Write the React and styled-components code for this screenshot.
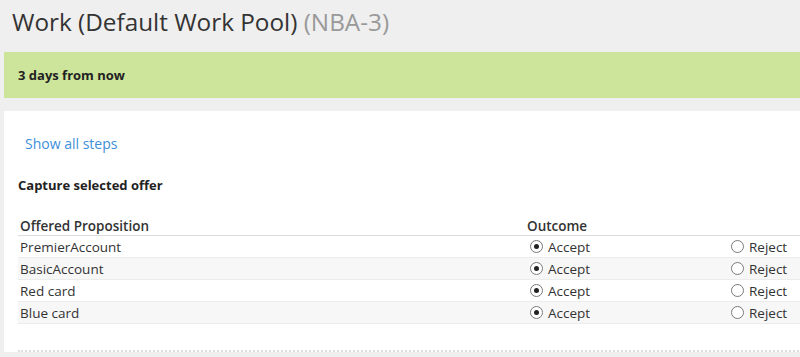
import React from "react";
import styled, { createGlobalStyle } from "styled-components";

const Global = createGlobalStyle`
  html, body { margin: 0; padding: 0; background: #efefef; overflow: hidden; }
  body { font-family: "Open Sans", "Noto Sans", sans-serif; color: #333; }
`;

const Page = styled.div`
  width: 830px;
  height: 357px;
  padding: 0 0 5px 4px;
  box-sizing: border-box;
  display: flex;
  flex-direction: column;
`;

const Title = styled.h1`
  margin: 0;
  padding: 5px 0 0 8px;
  height: 52px;
  box-sizing: border-box;
  font-size: 24.3px;
  font-weight: 400;
  color: #333;
  line-height: 34px;
`;

const Muted = styled.span`
  color: #999;
`;

const Banner = styled.div`
  background: #cde59b;
  height: 46px;
  display: flex;
  align-items: center;
  padding-left: 14px;
  font-size: 13px;
  font-weight: 700;
  color: #222;
  margin-bottom: 13px;
`;

const Panel = styled.div`
  background: #fff;
  flex: 1;
  padding: 23px 0 0 14px;
  display: flex;
  flex-direction: column;
`;

const Link = styled.a`
  color: #3d8fd9;
  font-size: 14px;
  margin-left: 7px;
  text-decoration: none;
  line-height: 20px;
`;

const Section = styled.div`
  margin-top: 21px;
  font-size: 13px;
  font-weight: 700;
  color: #222;
  line-height: 20px;
`;

const Table = styled.div`
  margin-top: 21px;
  display: grid;
  grid-template-columns: 509px 201px 1fr;
`;

const Head = styled.div`
  font-size: 13.5px;
  font-weight: 600;
  color: #333;
  padding-left: ${(p) => (p.$first ? "2px" : "0")};
  height: 19px;
  line-height: 21px;
  border-bottom: 1px solid #dcdcdc;
`;

const Cell = styled.div`
  height: 21px;
  display: flex;
  align-items: center;
  font-size: 13.5px;
  color: #333;
  padding-left: ${(p) => (p.$first ? "2px" : "3px")};
  background: ${(p) => (p.$alt ? "#f7f7f7" : "#fff")};
  border-bottom: 1px solid #ececec;
`;

const Radio = styled.span`
  width: 11px;
  height: 11px;
  border-radius: 50%;
  border: 1px solid #7a7a7a;
  background: #fff;
  display: inline-flex;
  align-items: center;
  justify-content: center;
  margin-right: 5px;
  flex-shrink: 0;
  &::after {
    content: "";
    width: 5px;
    height: 5px;
    border-radius: 50%;
    background: ${(p) => (p.$on ? "#222" : "transparent")};
  }
`;

const Footer = styled.div`
  margin-top: 26px;
  border-top: 2px dotted #ddd;
`;

const rows = ["PremierAccount", "BasicAccount", "Red card", "Blue card"];

export default function App() {
  return (
    <>
      <Global />
      <Page>
        <Title>
          Work (Default Work Pool) <Muted>(NBA-3)</Muted>
        </Title>
        <Banner>3 days from now</Banner>
        <Panel>
          <Link href="#">Show all steps</Link>
          <Section>Capture selected offer</Section>
          <Table>
            <Head $first>Offered Proposition</Head>
            <Head>Outcome</Head>
            <Head />
            {rows.map((r, i) => (
              <React.Fragment key={r}>
                <Cell $first $alt={i % 2 === 1}>{r}</Cell>
                <Cell $alt={i % 2 === 1}>
                  <Radio $on />
                  Accept
                </Cell>
                <Cell $alt={i % 2 === 1}>
                  <Radio />
                  Reject
                </Cell>
              </React.Fragment>
            ))}
          </Table>
          <Footer />
        </Panel>
      </Page>
    </>
  );
}
